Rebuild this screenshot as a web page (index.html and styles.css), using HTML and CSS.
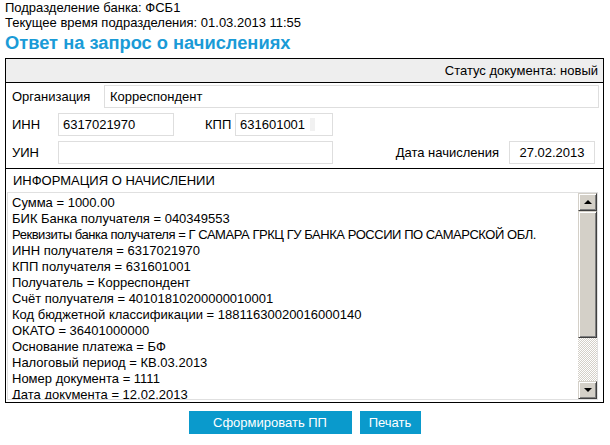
FILE: index.html
```html
<!DOCTYPE html>
<html lang="ru">
<head>
<meta charset="utf-8">
<title>Ответ на запрос о начислениях</title>
<link rel="stylesheet" href="styles.css">
</head>
<body>
<div class="info-line">Подразделение банка: ФСБ1</div>
<div class="info-line">Текущее время подразделения: 01.03.2013 11:55</div>
<h1 class="title">Ответ на запрос о начислениях</h1>
<div class="doc">
  <div class="doc-head">Статус документа: новый</div>
  <div class="form">
    <div class="row">
      <span class="lbl lbl-org">Организация</span>
      <div class="field field-grow">Корреспондент</div>
    </div>
    <div class="row">
      <span class="lbl lbl-short">ИНН</span>
      <div class="field field-inn">6317021970</div>
      <span class="lbl lbl-kpp">КПП</span>
      <div class="field field-kpp">631601001<span class="ghost"></span></div>
    </div>
    <div class="row">
      <span class="lbl lbl-short">УИН</span>
      <div class="field field-uin"></div>
      <span class="lbl lbl-date">Дата начисления</span>
      <div class="field field-date">27.02.2013</div>
    </div>
  </div>
  <div class="charge">
    <div class="charge-title">ИНФОРМАЦИЯ О НАЧИСЛЕНИИ</div>
    <div class="textbox">
      <div class="textbox-content">
        <div>Сумма = 1000.00</div>
        <div>БИК Банка получателя = 040349553</div>
        <div class="tight">Реквизиты банка получателя = Г САМАРА ГРКЦ ГУ БАНКА РОССИИ ПО САМАРСКОЙ ОБЛ.</div>
        <div>ИНН получателя = 6317021970</div>
        <div>КПП получателя = 631601001</div>
        <div>Получатель = Корреспондент</div>
        <div>Счёт получателя = 40101810200000010001</div>
        <div>Код бюджетной классификации = 18811630020016000140</div>
        <div>ОКАТО = 36401000000</div>
        <div>Основание платежа = БФ</div>
        <div>Налоговый период = КВ.03.2013</div>
        <div>Номер документа = 1111</div>
        <div>Дата документа = 12.02.2013</div>
      </div>
      <div class="scrollbar">
        <div class="sb-btn"><span class="arrow-up"></span></div>
        <div class="sb-thumb"></div>
        <div class="sb-track"></div>
        <div class="sb-btn"><span class="arrow-down"></span></div>
      </div>
    </div>
  </div>
</div>
<div class="actions">
  <button class="btn btn-wide" type="button">Сформировать ПП</button>
  <button class="btn btn-narrow" type="button">Печать</button>
</div>
</body>
</html>
```

FILE: styles.css
```css
html, body {
  margin: 0;
  padding: 0;
  background: #fff;
}
body {
  padding: 0 6px 0 5px;
  font-family: "Liberation Sans", Arial, sans-serif;
  font-size: 13px;
  color: #000;
}
.info-line {
  line-height: 15px;
}
.title {
  margin: 2px 0 4px;
  font-size: 18.3px;
  line-height: 22px;
  font-weight: bold;
  color: #1a9bd7;
}
.doc {
  border: 1px solid #000;
}
.doc-head {
  background: #eeeeee;
  height: 23px;
  line-height: 23px;
  text-align: right;
  padding-right: 5px;
  border-bottom: 1px solid #000;
}
.form {
  padding: 2px 4px 4px 6px;
  display: flex;
  flex-direction: column;
  gap: 5px;
}
.row {
  display: flex;
  align-items: center;
  height: 23px;
}
.lbl {
  flex: none;
  white-space: nowrap;
}
.lbl-org { width: 92px; }
.lbl-short { width: 46px; }
.lbl-kpp { width: 30px; margin-left: 31px; }
.lbl-date { margin-left: auto; margin-right: 10px; }
.field {
  box-sizing: border-box;
  height: 23px;
  line-height: 21px;
  border: 1px solid #dedede;
  background: #fff;
  padding: 0 4px;
  white-space: nowrap;
  display: flex;
  align-items: center;
}
.field-grow { flex: 1; padding-left: 5px; }
.field-inn { width: 116px; }
.field-kpp { width: 98px; }
.field-uin { width: 275px; }
.field-date { width: 86px; justify-content: center; margin-right: 4px; padding: 0; }
.ghost {
  margin-left: auto;
  margin-right: 13px;
  width: 5px;
  height: 13px;
  background: #f1f1f1;
}
.charge {
  border-top: 1px solid #000;
  padding: 0 5px 2px 1px;
}
.charge-title {
  padding-left: 6px;
  line-height: 23px;
}
.textbox {
  box-sizing: border-box;
  height: 208px;
  border: 1px solid #e0e0e0;
  display: flex;
}
.textbox-content {
  flex: 1;
  overflow: hidden;
  padding: 2px 0 0 4px;
  line-height: 16px;
  white-space: nowrap;
}
.tight {
  letter-spacing: -0.45px;
}
.scrollbar {
  width: 19px;
  display: flex;
  flex-direction: column;
}
.sb-btn, .sb-thumb {
  box-sizing: border-box;
  background: #d4d0c8;
  border-style: solid;
  border-width: 1px;
  border-color: #d4d0c8 #404040 #404040 #d4d0c8;
  box-shadow: inset 1px 1px 0 #fff, inset -1px -1px 0 #808080;
}
.sb-btn {
  height: 18px;
  display: flex;
  align-items: center;
  justify-content: center;
  flex: none;
}
.sb-thumb {
  height: 127px;
  flex: none;
}
.sb-track {
  flex: 1;
  background: repeating-conic-gradient(#d4d0c8 0 25%, #ffffff 0 50%) 0 0 / 2px 2px;
}
.arrow-up, .arrow-down {
  width: 0;
  height: 0;
  border-left: 4px solid transparent;
  border-right: 4px solid transparent;
}
.arrow-up { border-bottom: 4px solid #000; }
.arrow-down { border-top: 4px solid #000; }
.actions {
  display: flex;
  justify-content: center;
  gap: 8px;
  margin-top: 8px;
}
.btn {
  height: 23px;
  border: none;
  background: #0a9acc;
  color: #fff;
  font-family: "Liberation Sans", Arial, sans-serif;
  font-size: 13px;
  padding: 0;
  cursor: pointer;
}
.btn-wide { width: 163px; }
.btn-narrow { width: 61px; }
```
